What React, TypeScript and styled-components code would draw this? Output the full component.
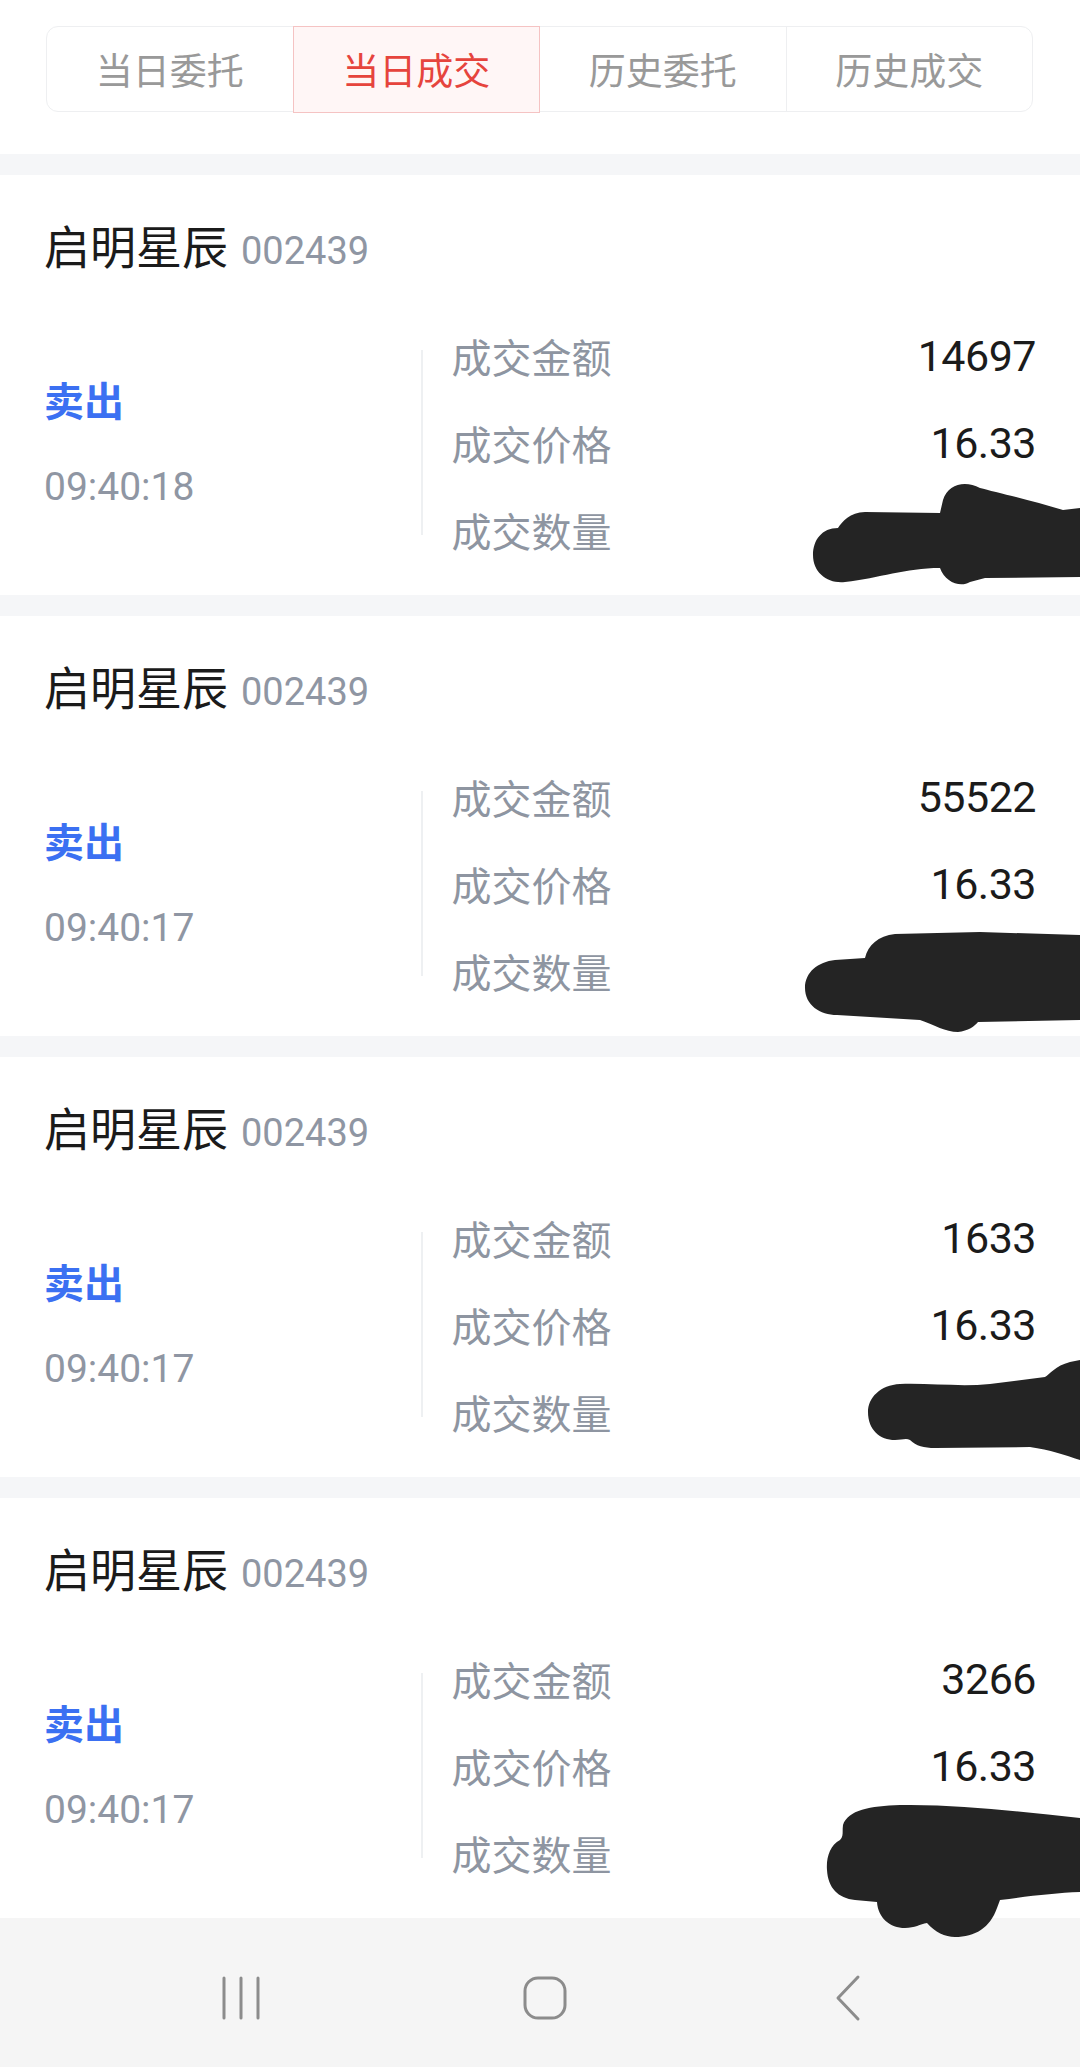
import React from 'react';
import styled, { createGlobalStyle } from 'styled-components';

const GlobalStyle = createGlobalStyle`
  html, body {
    margin: 0;
    padding: 0;
    background: #f5f6f8;
  }
  body {
    font-family: Roboto, "Noto Sans CJK SC", sans-serif;
    -webkit-font-smoothing: antialiased;
  }
`;

const Page = styled.div`
  width: 1080px;
  min-height: 2067px;
  display: flex;
  flex-direction: column;
  background: #f5f6f8;
`;

const Header = styled.div`
  background: #fff;
  padding: 26px 47px 42px 46px;
`;

const Tabs = styled.div`
  display: flex;
  height: 86px;
  border: 1.5px solid #eeeff1;
  border-radius: 12px;
  box-sizing: border-box;
`;

const Tab = styled.div<{ active?: boolean; divider?: boolean }>`
  flex: 1;
  display: flex;
  align-items: center;
  justify-content: center;
  font-family: "Noto Sans CJK SC", sans-serif;
  font-size: 37px;
  color: ${({ active }) => (active ? '#e6443d' : '#999999')};
  background: ${({ active }) => (active ? '#fff6f6' : 'transparent')};
  border: ${({ active }) => (active ? '1.5px solid #f5c3c3' : 'none')};
  border-left: ${({ active, divider }) =>
    active ? '1.5px solid #f5c3c3' : divider ? '1.5px solid #eeeff1' : 'none'};
  margin: ${({ active }) => (active ? '-1.5px 0' : '0')};
`;

const List = styled.div`
  display: flex;
  flex-direction: column;
  gap: 21px;
  padding-top: 21px;
`;

const Card = styled.div`
  position: relative;
  height: 420px;
  box-sizing: border-box;
  background: #fff;
  padding: 39px 44px 22px 44px;
`;

const TitleRow = styled.div`
  display: flex;
  align-items: baseline;
  height: 60px;
  line-height: 60px;
`;

const StockName = styled.span`
  font-family: "Noto Sans CJK SC", sans-serif;
  font-size: 46px;
  color: #1b1b1b;
`;

const StockCode = styled.span`
  margin-left: 13px;
  font-family: Roboto, sans-serif;
  font-size: 38px;
  color: #8f96a3;
`;

const Body = styled.div`
  display: flex;
  align-items: center;
  margin-top: 38px;
  height: 261px;
`;

const Side = styled.div`
  width: 377px;
  display: flex;
  flex-direction: column;
  gap: 28px;
`;

const Direction = styled.div`
  font-family: "Noto Sans CJK SC", sans-serif;
  font-weight: 700;
  font-size: 40px;
  line-height: 60px;
  color: #3b70f2;
`;

const Time = styled.div`
  font-family: Roboto, sans-serif;
  font-size: 39px;
  line-height: 60px;
  color: #8f96a3;
`;

const Divider = styled.div`
  width: 1.5px;
  height: 185px;
  background: #eef0f2;
`;

const Details = styled.div`
  flex: 1;
  padding-left: 29px;
  display: flex;
  flex-direction: column;
`;

const DetailRow = styled.div`
  height: 87px;
  display: flex;
  align-items: center;
  justify-content: space-between;
`;

const Label = styled.span`
  font-family: "Noto Sans CJK SC", sans-serif;
  font-size: 40px;
  color: #8e95a1;
`;

const Value = styled.span`
  font-family: Roboto, sans-serif;
  font-size: 43px;
  color: #1b1b1b;
  letter-spacing: -0.5px;
`;

const Scribble = styled.svg<{ left: number; top: number }>`
  position: absolute;
  left: ${({ left }) => left}px;
  top: ${({ top }) => top}px;
  z-index: 2;
  overflow: visible;
`;

const NavBar = styled.div`
  margin-top: auto;
  height: 149px;
  box-sizing: border-box;
  padding: 10px 0 0 10px;
  background: #f5f5f5;
  display: flex;
  align-items: center;
  justify-content: center;
`;

const NavButton = styled.div`
  width: 303px;
  display: flex;
  justify-content: center;
  align-items: center;
`;

type Trade = {
  time: string;
  amount: string;
  price: string;
  blob: { left: number; top: number; w: number; h: number; d: string };
};

const trades: Trade[] = [
  {
    time: '09:40:18',
    amount: '14697',
    price: '16.33',
    blob: {
      left: 780,
      top: 295,
      w: 300,
      h: 140,
      d: 'M 300 38 L 283 40 C 250 30, 215 22, 200 18 C 185 10, 168 14, 163 30 L 160 43 L 85 42 C 70 42, 62 52, 58 58 C 42 58, 33 70, 33 85 C 33 103, 48 114, 65 112 C 100 108, 125 98, 160 98 C 165 112, 180 118, 190 112 L 205 108 L 300 107 Z',
    },
  },
  {
    time: '09:40:17',
    amount: '55522',
    price: '16.33',
    blob: {
      left: 780,
      top: 294,
      w: 300,
      h: 140,
      d: 'M 300 25 L 200 22 L 115 24 C 98 26, 88 35, 85 48 L 55 50 C 38 52, 25 62, 25 78 C 25 95, 40 105, 57 105 L 140 110 C 155 115, 165 122, 178 122 C 188 121, 195 116, 198 112 L 300 110 Z',
    },
  },
  {
    time: '09:40:17',
    amount: '1633',
    price: '16.33',
    blob: {
      left: 840,
      top: 303,
      w: 240,
      h: 140,
      d: 'M 240 0 L 230 2 C 215 6, 210 14, 205 17 L 150 24 C 120 27, 90 23, 60 24 C 40 25, 28 38, 28 52 C 28 70, 40 80, 55 80 C 62 80, 66 78, 70 80 C 76 86, 84 88, 95 88 L 190 87 C 210 90, 225 95, 240 100 Z',
    },
  },
  {
    time: '09:40:17',
    amount: '3266',
    price: '16.33',
    blob: {
      left: 800,
      top: 292,
      w: 280,
      h: 160,
      d: 'M 280 28 C 220 22, 160 14, 100 15 C 70 16, 48 20, 43 35 C 42 42, 44 46, 40 50 C 30 55, 26 68, 27 80 C 28 98, 38 108, 55 110 L 77 112 C 78 128, 90 138, 105 138 C 115 138, 120 134, 127 133 C 135 142, 145 147, 155 147 C 175 147, 190 138, 197 118 L 200 110 C 230 106, 255 103, 280 102 Z',
    },
  },
];

const tabs = ['当日委托', '当日成交', '历史委托', '历史成交'];

const App = () => {
  return (
    <Page>
      <GlobalStyle />
      <Header>
        <Tabs>
          {tabs.map((t, i) => (
            <Tab key={t} active={i === 1} divider={i === 3}>
              {t}
            </Tab>
          ))}
        </Tabs>
      </Header>
      <List>
        {trades.map((trade, i) => (
          <Card key={i}>
            <TitleRow>
              <StockName>启明星辰</StockName>
              <StockCode>002439</StockCode>
            </TitleRow>
            <Body>
              <Side>
                <Direction>卖出</Direction>
                <Time>{trade.time}</Time>
              </Side>
              <Divider />
              <Details>
                <DetailRow>
                  <Label>成交金额</Label>
                  <Value>{trade.amount}</Value>
                </DetailRow>
                <DetailRow>
                  <Label>成交价格</Label>
                  <Value>{trade.price}</Value>
                </DetailRow>
                <DetailRow>
                  <Label>成交数量</Label>
                  <Value />
                </DetailRow>
              </Details>
            </Body>
            <Scribble
              left={trade.blob.left}
              top={trade.blob.top}
              width={trade.blob.w}
              height={trade.blob.h}
              viewBox={`0 0 ${trade.blob.w} ${trade.blob.h}`}
            >
              <path d={trade.blob.d} fill="#242424" />
            </Scribble>
          </Card>
        ))}
      </List>
      <NavBar>
        <NavButton>
          <svg width="44" height="46" viewBox="0 0 44 46">
            <g stroke="#8c8c8c" strokeWidth="3" strokeLinecap="round">
              <line x1="4" y1="3" x2="4" y2="43" />
              <line x1="21" y1="3" x2="21" y2="43" />
              <line x1="38" y1="3" x2="38" y2="43" />
            </g>
          </svg>
        </NavButton>
        <NavButton>
          <svg width="46" height="46" viewBox="0 0 46 46">
            <rect x="3" y="3" width="40" height="40" rx="13" fill="none" stroke="#8c8c8c" strokeWidth="3" />
          </svg>
        </NavButton>
        <NavButton>
          <svg width="30" height="48" viewBox="0 0 30 48">
            <polyline
              points="25,3 5,24 25,45"
              fill="none"
              stroke="#8c8c8c"
              strokeWidth="3"
              strokeLinecap="round"
              strokeLinejoin="round"
            />
          </svg>
        </NavButton>
      </NavBar>
    </Page>
  );
};

export default App;
